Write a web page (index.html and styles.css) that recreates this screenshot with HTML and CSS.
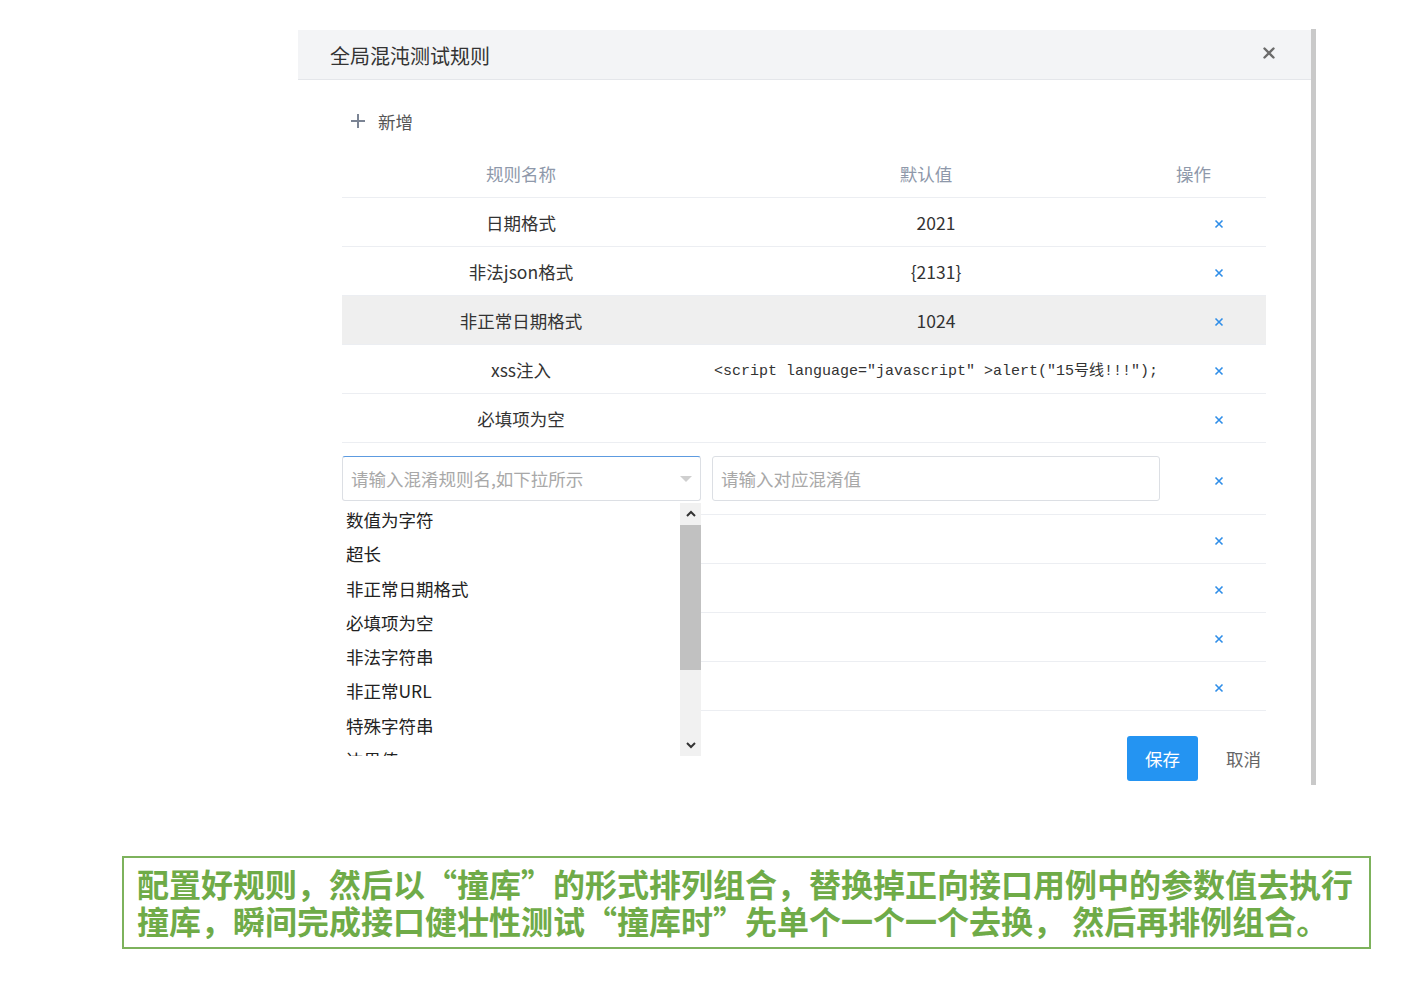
FILE: index.html
```html
<!DOCTYPE html>
<html lang="zh-CN">
<head>
<meta charset="utf-8">
<title>全局混沌测试规则</title>
<link rel="stylesheet" href="styles.css">
</head>
<body>
<div class="page">
  <div class="modal-wrap">
    <div class="modal">
      <div class="modal-header">
        <span class="modal-title">全局混沌测试规则</span>
        <svg class="close" width="12" height="12" viewBox="0 0 12 12"><path d="M1.5 1.5L10.5 10.5M10.5 1.5L1.5 10.5" stroke="#6b6b6b" stroke-width="2.4" stroke-linecap="round"/></svg>
      </div>
      <div class="modal-body">
        <div class="add-row">
          <svg width="16" height="16" viewBox="0 0 16 16"><path d="M8 1V15M1 8H15" stroke="#7b8494" stroke-width="2"/></svg>
          <span>新增</span>
        </div>
        <div class="t-head">
          <div class="c1">规则名称</div>
          <div class="c2 h2">默认值</div>
          <div class="c3 h3">操作</div>
        </div>
        <div class="t-row">
          <div class="c1">日期格式</div>
          <div class="c2">2021</div>
          <div class="c3"><svg class="x" width="10" height="10" viewBox="0 0 10 10"><path d="M1.5 1.5L8.5 8.5M8.5 1.5L1.5 8.5" stroke="#2f8ee8" stroke-width="1.6"/></svg></div>
        </div>
        <div class="t-row">
          <div class="c1">非法json格式</div>
          <div class="c2">{2131}</div>
          <div class="c3"><svg class="x" width="10" height="10" viewBox="0 0 10 10"><path d="M1.5 1.5L8.5 8.5M8.5 1.5L1.5 8.5" stroke="#2f8ee8" stroke-width="1.6"/></svg></div>
        </div>
        <div class="t-row hl">
          <div class="c1">非正常日期格式</div>
          <div class="c2">1024</div>
          <div class="c3"><svg class="x" width="10" height="10" viewBox="0 0 10 10"><path d="M1.5 1.5L8.5 8.5M8.5 1.5L1.5 8.5" stroke="#2f8ee8" stroke-width="1.6"/></svg></div>
        </div>
        <div class="t-row">
          <div class="c1">xss注入</div>
          <div class="c2 code">&lt;script language=″javascript″ &gt;alert(″15号线!!!″);</div>
          <div class="c3"><svg class="x" width="10" height="10" viewBox="0 0 10 10"><path d="M1.5 1.5L8.5 8.5M8.5 1.5L1.5 8.5" stroke="#2f8ee8" stroke-width="1.6"/></svg></div>
        </div>
        <div class="t-row">
          <div class="c1">必填项为空</div>
          <div class="c2"></div>
          <div class="c3"><svg class="x" width="10" height="10" viewBox="0 0 10 10"><path d="M1.5 1.5L8.5 8.5M8.5 1.5L1.5 8.5" stroke="#2f8ee8" stroke-width="1.6"/></svg></div>
        </div>
        <div class="t-row input-row">
          <div class="c1 sel-cell">
            <div class="select">
              <span class="ph">请输入混淆规则名,如下拉所示</span>
              <svg width="12" height="6" viewBox="0 0 12 6"><path d="M0 0H12L6 6Z" fill="#cfcfcf"/></svg>
            </div>
            <div class="dropdown">
              <ul class="options">
                <li>数值为字符</li>
                <li>超长</li>
                <li>非正常日期格式</li>
                <li>必填项为空</li>
                <li>非法字符串</li>
                <li>非正常URL</li>
                <li>特殊字符串</li>
                <li>边界值</li>
              </ul>
              <div class="sbar">
                <div class="sarrow">
                  <svg width="12" height="8" viewBox="0 0 12 8"><path d="M2 6L6 2L10 6" stroke="#333" stroke-width="2" fill="none"/></svg>
                </div>
                <div class="strack"><div class="sthumb"></div></div>
                <div class="sarrow">
                  <svg width="12" height="8" viewBox="0 0 12 8"><path d="M2 2L6 6L10 2" stroke="#333" stroke-width="2" fill="none"/></svg>
                </div>
              </div>
            </div>
          </div>
          <div class="c2 in-cell"><div class="input"><span class="ph">请输入对应混淆值</span></div></div>
          <div class="c3"><svg class="x" width="10" height="10" viewBox="0 0 10 10"><path d="M1.5 1.5L8.5 8.5M8.5 1.5L1.5 8.5" stroke="#2f8ee8" stroke-width="1.6"/></svg></div>
        </div>
        <div class="t-row">
          <div class="c1"></div><div class="c2"></div>
          <div class="c3"><svg class="x" width="10" height="10" viewBox="0 0 10 10"><path d="M1.5 1.5L8.5 8.5M8.5 1.5L1.5 8.5" stroke="#2f8ee8" stroke-width="1.6"/></svg></div>
        </div>
        <div class="t-row">
          <div class="c1"></div><div class="c2"></div>
          <div class="c3"><svg class="x" width="10" height="10" viewBox="0 0 10 10"><path d="M1.5 1.5L8.5 8.5M8.5 1.5L1.5 8.5" stroke="#2f8ee8" stroke-width="1.6"/></svg></div>
        </div>
        <div class="t-row">
          <div class="c1"></div><div class="c2"></div>
          <div class="c3"><svg class="x" width="10" height="10" viewBox="0 0 10 10"><path d="M1.5 1.5L8.5 8.5M8.5 1.5L1.5 8.5" stroke="#2f8ee8" stroke-width="1.6"/></svg></div>
        </div>
        <div class="t-row">
          <div class="c1"></div><div class="c2"></div>
          <div class="c3"><svg class="x" width="10" height="10" viewBox="0 0 10 10"><path d="M1.5 1.5L8.5 8.5M8.5 1.5L1.5 8.5" stroke="#2f8ee8" stroke-width="1.6"/></svg></div>
        </div>
        <div class="actions">
          <button class="btn-primary">保存</button>
          <button class="btn-text">取消</button>
        </div>
      </div>
    </div>
    <div class="vbar"></div>
  </div>
  <div class="note">
    <div class="note-line">配置好规则，然后以“撞库”的形式排列组合，替换掉正向接口用例中的参数值去执行</div>
    <div class="note-line">撞库，瞬间完成接口健壮性测试“撞库时”先单个一个一个去换， 然后再排例组合。</div>
  </div>
</div>
</body>
</html>
```
FILE: styles.css
```css
* { box-sizing: border-box; }
body {
  margin: 0;
  background: #fff;
  font-family: "Noto Sans CJK SC", "Noto Sans", sans-serif;
  color: #333;
}
.page {
  padding: 29px 0 0 0;
}
.modal-wrap {
  display: flex;
  margin-left: 298px;
  width: 1018px;
  height: 756px;
}
.modal {
  width: 1013px;
  padding-top: 1px;
  background: #fff;
}
.vbar {
  width: 5px;
  background: #c9c9c9;
}
.modal-header {
  height: 50px;
  background: #f3f4f6;
  border-bottom: 1px solid #e4e6ea;
  display: flex;
  align-items: center;
  justify-content: space-between;
  padding: 0 36px 0 32px;
}
.modal-title {
  font-size: 20px;
  color: #333;
  line-height: 1;
  margin-top: 2px;
}
.close { display: block; margin-top: -4px; }
.modal-body {
  padding: 0 45px 0 44px;
}
.add-row {
  height: 40px;
  margin-top: 21px;
  display: flex;
  align-items: center;
  gap: 12px;
  padding-left: 8px;
  font-size: 17.5px;
  color: #555;
}
.add-row svg { display: block; }
.t-head, .t-row {
  display: grid;
  grid-template-columns: 358px 472px 94px;
  align-items: center;
  border-bottom: 1px solid #eceef2;
  font-size: 17.5px;
}
.t-head {
  margin-top: 8px;
  height: 49px;
  color: #8e98aa;
}
.t-row {
  height: 49px;
  color: #333;
}
.t-row.hl { background: #efefef; }
.c1, .c2, .c3 { text-align: center; }
.h2 { padding-right: 20px; }
.c3 { display: flex; justify-content: center; }
.t-head .h3 { justify-content: flex-start; padding-left: 4px; }
.x { display: block; margin-top: 3px; }
.code {
  font-family: "Liberation Mono", "Noto Sans CJK SC", monospace;
  font-size: 15px;
  color: #333;
  white-space: nowrap;
}
.input-row {
  height: 72px;
  align-items: start;
  padding-top: 13px;
}
.input-row .c3 { padding-top: 17px; }
.sel-cell { position: relative; text-align: left; }
.select {
  width: 359px;
  height: 45px;
  border: 1px solid #dcdfe4;
  border-top-color: #5d9be0;
  border-radius: 3px;
  display: flex;
  align-items: center;
  justify-content: space-between;
  padding: 0 8px 0 8px;
}
.ph {
  color: #a8a8a8;
  font-size: 17.5px;
  white-space: nowrap;
}
.in-cell { padding-left: 12px; text-align: left; }
.input {
  width: 448px;
  height: 45px;
  border: 1px solid #dcdfe4;
  border-radius: 3px;
  display: flex;
  align-items: center;
  padding-left: 8px;
}
.dropdown {
  position: absolute;
  left: 0;
  top: 47px;
  width: 359px;
  height: 253px;
  background: #fff;
  display: flex;
  z-index: 5;
  overflow: hidden;
}
.options {
  list-style: none;
  margin: 0;
  padding: 0 0 0 4px;
  flex: 1;
  color: #222;
  font-size: 17.5px;
}
.options li {
  height: 34.3px;
  line-height: 34.3px;
  white-space: nowrap;
}
.sbar {
  width: 21px;
  display: flex;
  flex-direction: column;
  background: #f1f1f1;
}
.sarrow {
  height: 22px;
  display: flex;
  align-items: center;
  justify-content: center;
}
.strack {
  flex: 1;
}
.sthumb {
  height: 145px;
  background: #c1c1c1;
}
.actions {
  display: flex;
  justify-content: flex-end;
  align-items: center;
  margin-top: 25px;
  padding-right: 5px;
}
.btn-primary {
  width: 71px;
  height: 45px;
  background: #2494f2;
  color: #fff;
  border: none;
  border-radius: 3px;
  font-family: inherit;
  font-size: 17.5px;
  padding: 0;
}
.btn-text {
  background: none;
  border: none;
  font-family: inherit;
  font-size: 17.5px;
  color: #666;
  padding: 0;
  margin-left: 28px;
}
.note {
  margin: 71px 0 0 122px;
  width: 1249px;
  height: 93px;
  border: 2px solid #7db25c;
  padding: 8px 0 0 13px;
  color: #6fab48;
  font-weight: 700;
  font-size: 32px;
  letter-spacing: 0px;
  white-space: nowrap;
  overflow: hidden;
}
.note-line {
  height: 37px;
  line-height: 34px;
}
```
